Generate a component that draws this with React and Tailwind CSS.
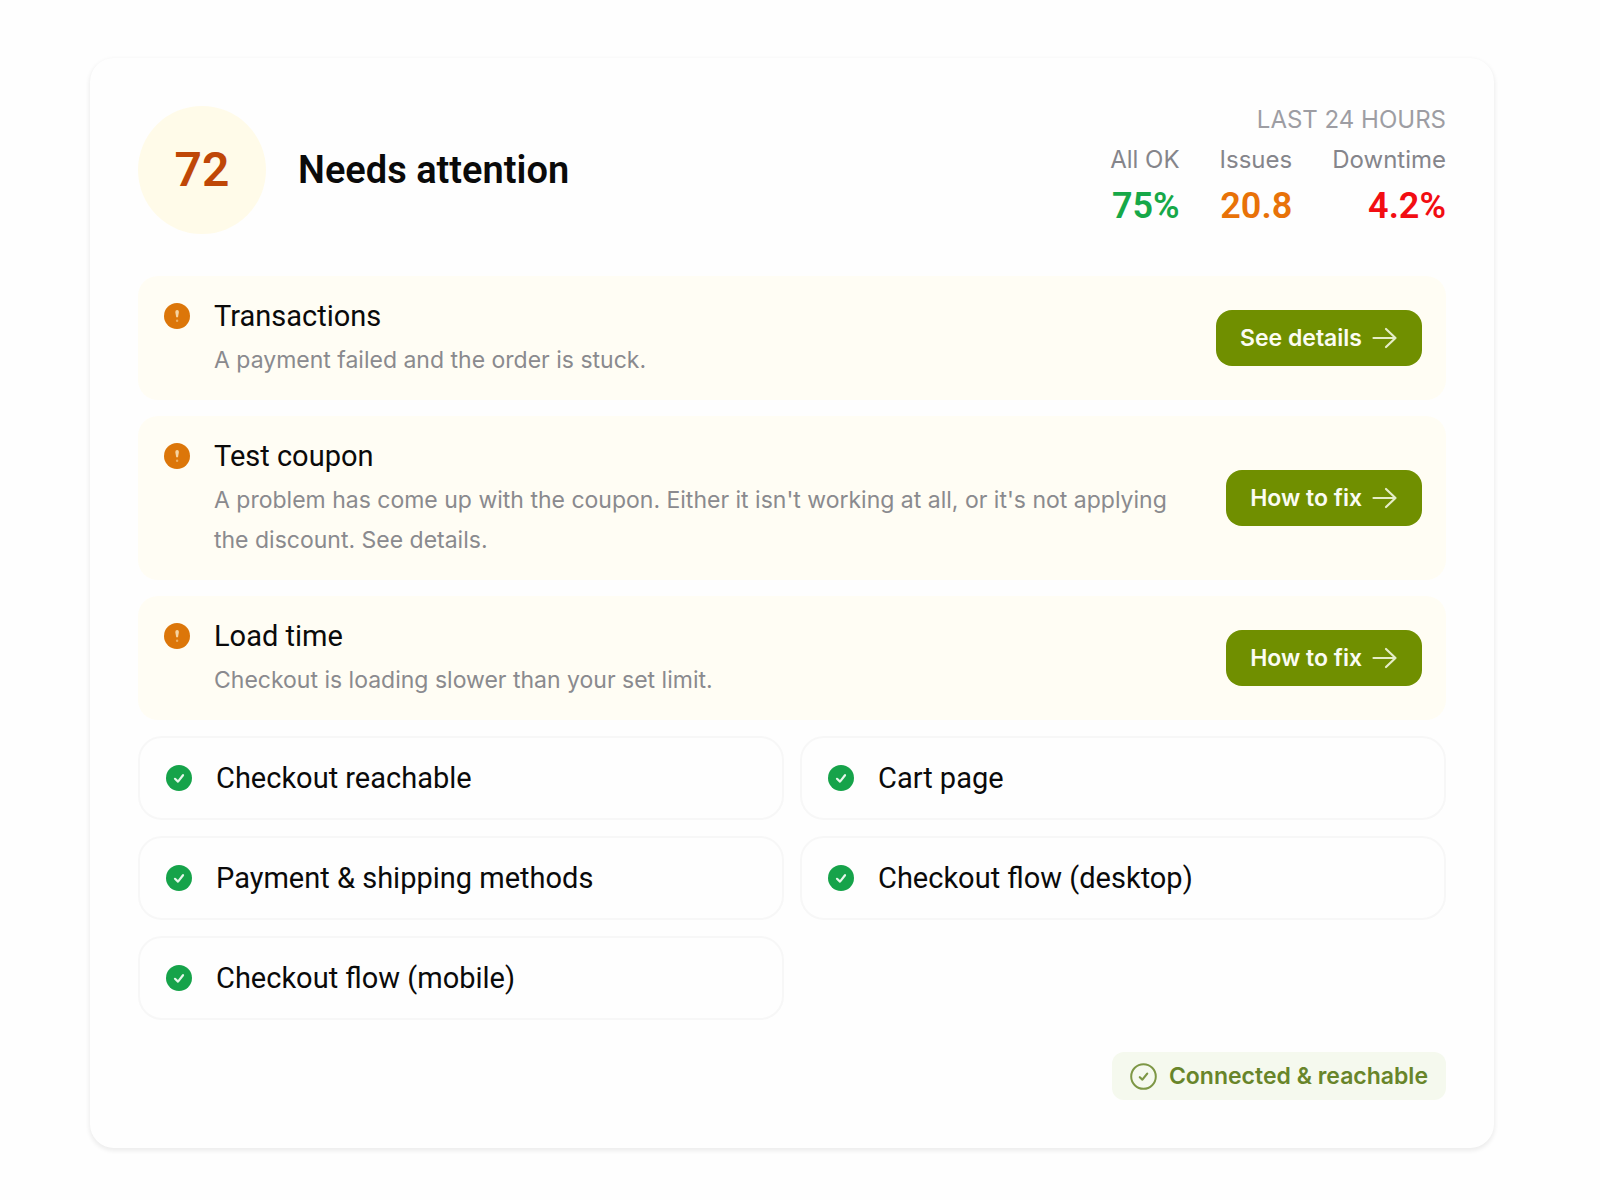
const stats = [
  { label: 'All OK', value: '75%', color: 'text-[#16a848]' },
  { label: 'Issues', value: '20.8', color: 'text-[#e87208]' },
  { label: 'Downtime', value: '4.2%', color: 'text-[#f20d12]' },
]

const alerts = [
  { title: 'Transactions', text: 'A payment failed and the order is stuck.', action: 'See details' },
  {
    title: 'Test coupon',
    text: "A problem has come up with the coupon. Either it isn't working at all, or it's not applying the discount. See details.",
    action: 'How to fix',
  },
  { title: 'Load time', text: 'Checkout is loading slower than your set limit.', action: 'How to fix' },
]

const checks = [
  'Checkout reachable',
  'Cart page',
  'Payment & shipping methods',
  'Checkout flow (desktop)',
  'Checkout flow (mobile)',
]

function WarningIcon() {
  return (
    <svg viewBox="0 0 26 26" className="mt-[7px] size-[26px] shrink-0" aria-hidden="true">
      <circle cx="13" cy="13" r="13" fill="#dc7609" />
      <path d="M11.3 8.9a1.8 1.8 0 0 1 3.6 0l-.9 5.3h-1.8z" fill="#f6d3a0" />
      <circle cx="13.1" cy="17.8" r="1.2" fill="#ecae62" />
    </svg>
  )
}

function CheckIcon() {
  return (
    <svg viewBox="0 0 26 26" className="size-[26px] shrink-0" aria-hidden="true">
      <circle cx="13" cy="13" r="13" fill="#16a34a" />
      <path d="M9 13.8l3 2.8 5-6.4" fill="none" stroke="#e6f7eb" strokeWidth="2.2" strokeLinecap="round" strokeLinejoin="round" />
    </svg>
  )
}

function Arrow() {
  return (
    <svg viewBox="0 0 26 24" className="h-6 w-[26px]" fill="none" stroke="#e6edc8" strokeWidth="2.2" strokeLinecap="round" strokeLinejoin="round" aria-hidden="true">
      <path d="M1.5 12h22M14 3l9.5 9-9.5 9" />
    </svg>
  )
}

function Alert({ title, text, action }) {
  return (
    <div className="flex items-center justify-between gap-10 rounded-[20px] bg-[#fffdf4] py-5 pr-6 pl-[26px]">
      <div className="flex items-start gap-6">
        <WarningIcon />
        <div>
          <h3 className="font-['Roboto',sans-serif] text-[29px] leading-10 text-[#0a0a0a]">{title}</h3>
          <p className="mt-1 text-[23px] leading-10 text-[#8a8a8e]">{text}</p>
        </div>
      </div>
      <button className="flex h-14 shrink-0 items-center gap-[10px] rounded-2xl bg-[#708f00] px-6 text-[23px] font-semibold text-[#fbfcf2]">
        {action}
        <Arrow />
      </button>
    </div>
  )
}

export default function App() {
  return (
    <main className="min-h-screen bg-[#fefefe] pt-[58px] pr-[106px] pb-[52px] pl-[90px] font-['Inter',sans-serif]">
      <section className="rounded-3xl bg-[#fefefe] p-12 shadow-[0_2px_4px_1px_rgba(0,0,0,0.07)]">
        <header className="mb-[42px] flex items-start justify-between">
          <div className="flex items-center gap-8">
            <div className="flex size-32 items-center justify-center rounded-full bg-[#fffbe9] font-['Roboto',sans-serif] text-5xl font-semibold text-[#bf4707]">
              72
            </div>
            <h2 className="font-['Roboto',sans-serif] text-[38px] leading-10 font-semibold text-[#0a0a0a]">Needs attention</h2>
          </div>
          <div className="text-right text-2xl leading-7">
            <p className="text-[#9d9da3]">LAST 24 HOURS</p>
            <dl className="mt-3 flex justify-end gap-10">
              {stats.map((s) => (
                <div key={s.label}>
                  <dt className="text-[#85858b]">{s.label}</dt>
                  <dd className={`mt-3 font-['Roboto',sans-serif] text-4xl leading-10 font-semibold ${s.color}`}>{s.value}</dd>
                </div>
              ))}
            </dl>
          </div>
        </header>

        <div className="space-y-4">
          {alerts.map((a) => (
            <Alert key={a.title} {...a} />
          ))}
        </div>

        <ul className="mt-4 grid grid-cols-2 gap-4">
          {checks.map((name) => (
            <li key={name} className="flex h-[84px] items-center gap-6 rounded-3xl border-2 border-[#f7f7f7] px-[26px] font-['Roboto',sans-serif] text-[29px] leading-10 text-[#0a0a0a]">
              <CheckIcon />
              {name}
            </li>
          ))}
        </ul>

        <div className="mt-8 flex justify-end">
          <span className="flex h-12 items-center gap-3 rounded-xl bg-[#f5f9ee] px-[18px] text-[23px] font-semibold text-[#68852a]">
            <svg viewBox="0 0 27 27" className="size-[27px]" fill="none" stroke="#7d9745" strokeLinecap="round" strokeLinejoin="round" aria-hidden="true">
              <circle cx="13.5" cy="13.5" r="12.3" strokeWidth="2" />
              <path d="M9.8 14.2l2.6 2.4 4.8-6" strokeWidth="2.2" />
            </svg>
            Connected &amp; reachable
          </span>
        </div>
      </section>
    </main>
  )
}
